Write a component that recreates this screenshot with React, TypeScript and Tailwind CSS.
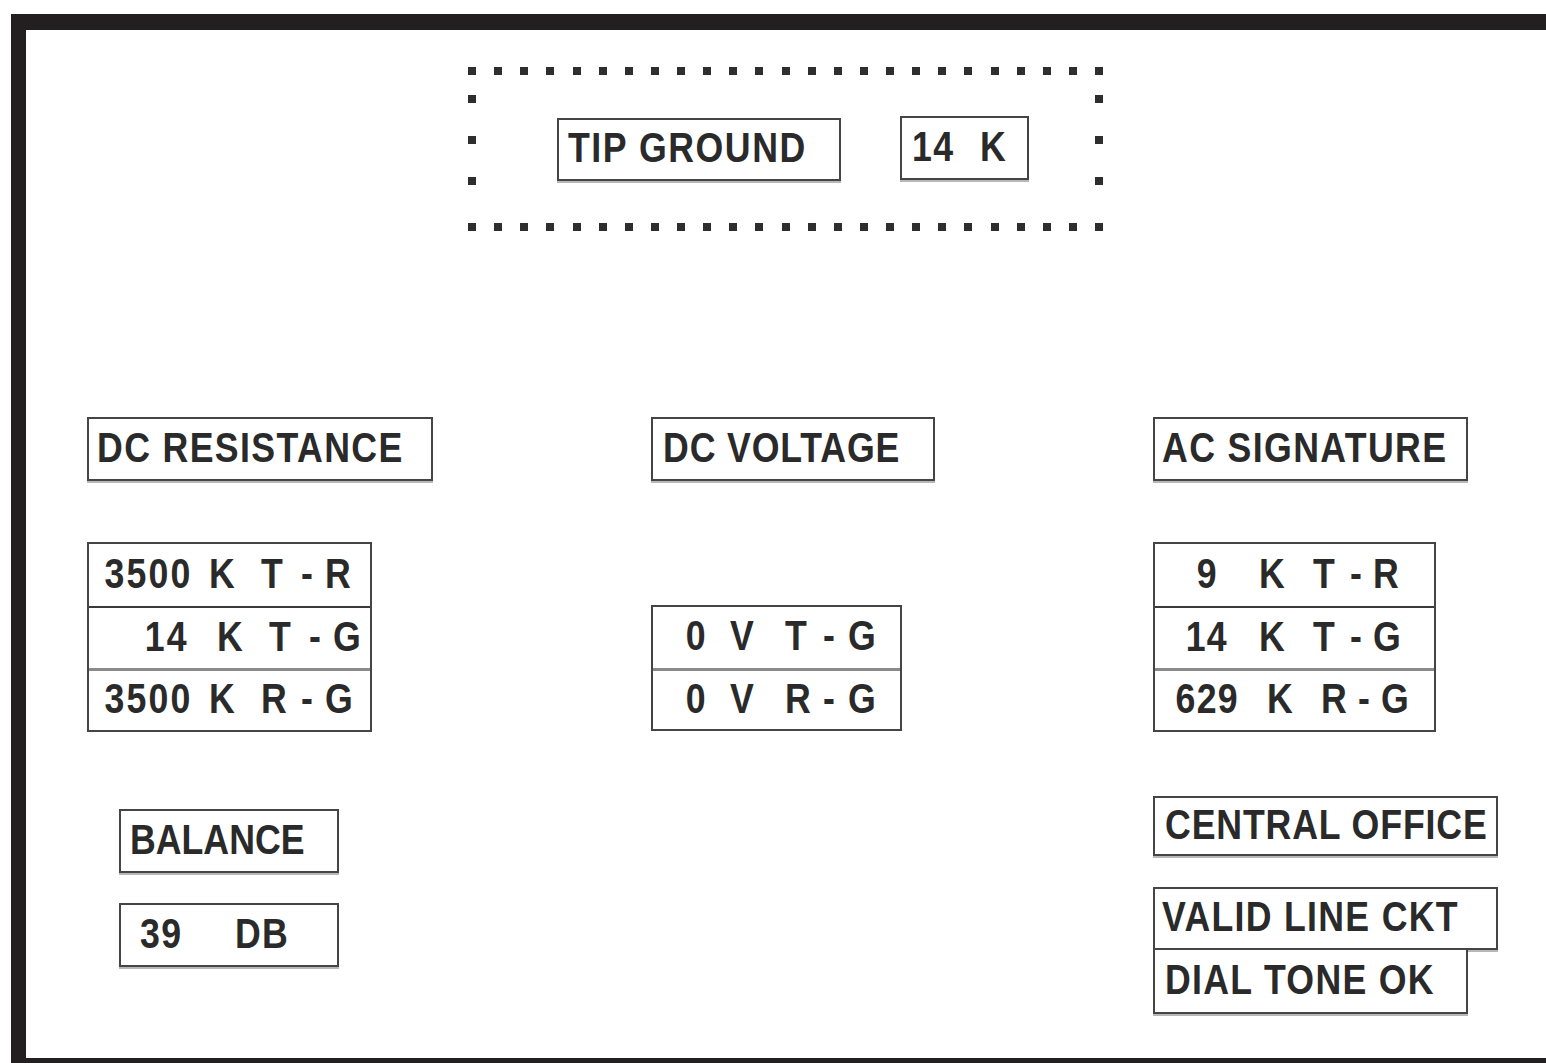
import React from "react";

const font = {
	fontFamily: '"Liberation Sans", Arial, sans-serif',
};

// the screen font is a narrow bold face, so squeeze the glyphs a bit
const Narrow: React.FC<{ children: React.ReactNode; origin?: string }> = ({
	children,
	origin = "origin-left",
}) => <span className={`inline-block scale-x-[0.85] ${origin}`}>{children}</span>;

const Dot = () => <span className="block w-[8px] h-[8px] bg-[#2e2e2e]" />;

const DotRow = () => (
	<div className="flex justify-between">
		{Array.from({ length: 25 }).map((_, i) => (
			<Dot key={`dot-${i}`} />
		))}
	</div>
);

const DotCol = () => (
	<div className="flex flex-col gap-[33px] pt-[20px]">
		<Dot />
		<Dot />
		<Dot />
	</div>
);

interface LabelProps {
	children: React.ReactNode;
	className?: string;
}

// single framed label, like the ones on the tester screen
const Label: React.FC<LabelProps> = ({ children, className = "" }) => (
	<div
		className={`flex items-center border-2 border-[#454545] bg-white shadow-[0_2px_0_#b8b8b8] pb-[3px] font-bold text-[42px] leading-none text-[#2a2a2a] whitespace-pre ${className}`}
	>
		{children}
	</div>
);

interface Reading {
	num: string;
	unit: string;
	a: string;
	b: string;
	shift?: boolean;
}

const dcResistance: Reading[] = [
	{ num: "3500", unit: "K", a: "T", b: "R" },
	{ num: "14", unit: "K", a: "T", b: "G", shift: true },
	{ num: "3500", unit: "K", a: "R", b: "G" },
];

const dcVoltage: Reading[] = [
	{ num: "0", unit: "V", a: "T", b: "G" },
	{ num: "0", unit: "V", a: "R", b: "G" },
];

const acSignature: Reading[] = [
	{ num: "9", unit: "K", a: "T", b: "R" },
	{ num: "14", unit: "K", a: "T", b: "G" },
	{ num: "629", unit: "K", a: "R", b: "G", shift: true },
];

const rowText = "flex items-center pb-[3px] font-bold text-[42px] leading-none tracking-[1.5px]";

export default function App() {
	return (
		<div className="w-[1546px] h-[1063px] bg-white overflow-hidden text-[#2a2a2a]" style={font}>
			<div className="ml-[11px] mt-[14px] h-[1049px] border-l-[15px] border-t-[16px] border-b-[5px] border-[#231f20]">
				{/* Tip ground alarm */}
				<div className="ml-[442px] mt-[37px] w-[635px] h-[164px] flex flex-col justify-between">
					<DotRow />
					<div className="flex flex-1 justify-between">
						<DotCol />
						<div className="flex items-start gap-[59px] mt-[43px] mr-auto ml-[81px]">
							<Label className="w-[284px] h-[63px] pl-[9px] tracking-[1.8px]">
								<Narrow>TIP GROUND</Narrow>
							</Label>
							<Label className="w-[129px] h-[64px] -mt-[2px] pl-[10px] tracking-[1.5px]">
								<Narrow>14</Narrow>
								<span className="ml-[18px]">
									<Narrow>K</Narrow>
								</span>
							</Label>
						</div>
						<DotCol />
					</div>
					<DotRow />
				</div>

				<div className="grid grid-cols-[564px_502px_1fr] mt-[186px] pl-[61px]">
					{/* DC resistance */}
					<div className="flex flex-col items-start">
						<Label className="w-[346px] h-[64px] pl-[8px] tracking-[1.6px]">
							<Narrow>DC RESISTANCE</Narrow>
						</Label>
						<div className="mt-[61px] w-[285px] border-2 border-[#454545] flex flex-col">
							{dcResistance.map((r, i) => (
								<div
									className={`${rowText} h-[62px] ${i === 1 ? "border-t-2 border-[#3a3a3a]" : ""} ${i === 2 ? "border-t-[3px] border-[#8a8a8a]" : ""}`}
									key={`dcr-${i}`}
								>
									<span className="w-[100px] text-right tracking-[2.5px]">
										<Narrow origin="origin-right">{r.num}</Narrow>
									</span>
									<span className={`${r.shift ? "ml-[28px]" : "ml-[20px]"} w-[52px]`}>
										<Narrow>{r.unit}</Narrow>
									</span>
									<span className="w-[40px]">
										<Narrow>{r.a}</Narrow>
									</span>
									<span className="w-[24px]">
										<Narrow>-</Narrow>
									</span>
									<Narrow>{r.b}</Narrow>
								</div>
							))}
						</div>
						<Label className="mt-[77px] ml-[32px] w-[220px] h-[64px] pl-[9px] tracking-[0px]">
							<Narrow>BALANCE</Narrow>
						</Label>
						<Label className="mt-[30px] ml-[32px] w-[220px] h-[64px] pl-[19px] tracking-[1.5px]">
							<Narrow>39</Narrow>
							<span className="ml-[45px]">
								<Narrow>DB</Narrow>
							</span>
						</Label>
					</div>

					{/* DC voltage */}
					<div className="flex flex-col items-start">
						<Label className="w-[284px] h-[64px] pl-[10px] tracking-[1px]">
							<Narrow>DC VOLTAGE</Narrow>
						</Label>
						<div className="mt-[124px] w-[251px] border-2 border-[#454545] flex flex-col">
							{dcVoltage.map((r, i) => (
								<div
									className={`${rowText} h-[61px] ${i === 1 ? "border-t-[3px] border-[#8a8a8a]" : ""}`}
									key={`dcv-${i}`}
								>
									<span className="w-[54px] text-right">
										<Narrow origin="origin-right">{r.num}</Narrow>
									</span>
									<span className="ml-[23px] w-[55px]">
										<Narrow>{r.unit}</Narrow>
									</span>
									<span className="w-[38px]">
										<Narrow>{r.a}</Narrow>
									</span>
									<span className="w-[25px]">
										<Narrow>-</Narrow>
									</span>
									<Narrow>{r.b}</Narrow>
								</div>
							))}
						</div>
					</div>

					{/* AC signature */}
					<div className="flex flex-col items-start">
						<Label className="w-[315px] h-[64px] pl-[7px] tracking-[1.6px]">
							<Narrow>AC SIGNATURE</Narrow>
						</Label>
						<div className="mt-[61px] w-[283px] border-2 border-[#454545] flex flex-col">
							{acSignature.map((r, i) => (
								<div
									className={`${rowText} h-[62px] ${i === 1 ? "border-t-2 border-[#3a3a3a]" : ""} ${i === 2 ? "border-t-[3px] border-[#8a8a8a]" : ""}`}
									key={`acs-${i}`}
								>
									<span className="w-[104px] text-center">
										<Narrow origin="origin-center">{r.num}</Narrow>
									</span>
									<span className={`${r.shift ? "ml-[8px]" : ""} w-[54px]`}>
										<Narrow>{r.unit}</Narrow>
									</span>
									<span className="w-[37px]">
										<Narrow>{r.a}</Narrow>
									</span>
									<span className="w-[23px]">
										<Narrow>-</Narrow>
									</span>
									<Narrow>{r.b}</Narrow>
								</div>
							))}
						</div>
						<Label className="mt-[64px] w-[345px] h-[60px] pl-[10px] tracking-[1px]">
							<Narrow>CENTRAL OFFICE</Narrow>
						</Label>
						<Label className="mt-[31px] w-[345px] h-[63px] pl-[7px] tracking-[1.5px]">
							<Narrow>VALID LINE CKT</Narrow>
						</Label>
						<Label className="w-[315px] h-[64px] border-t-0 pl-[10px] tracking-[1.5px]">
							<Narrow>DIAL TONE OK</Narrow>
						</Label>
					</div>
				</div>
			</div>
		</div>
	);
}
